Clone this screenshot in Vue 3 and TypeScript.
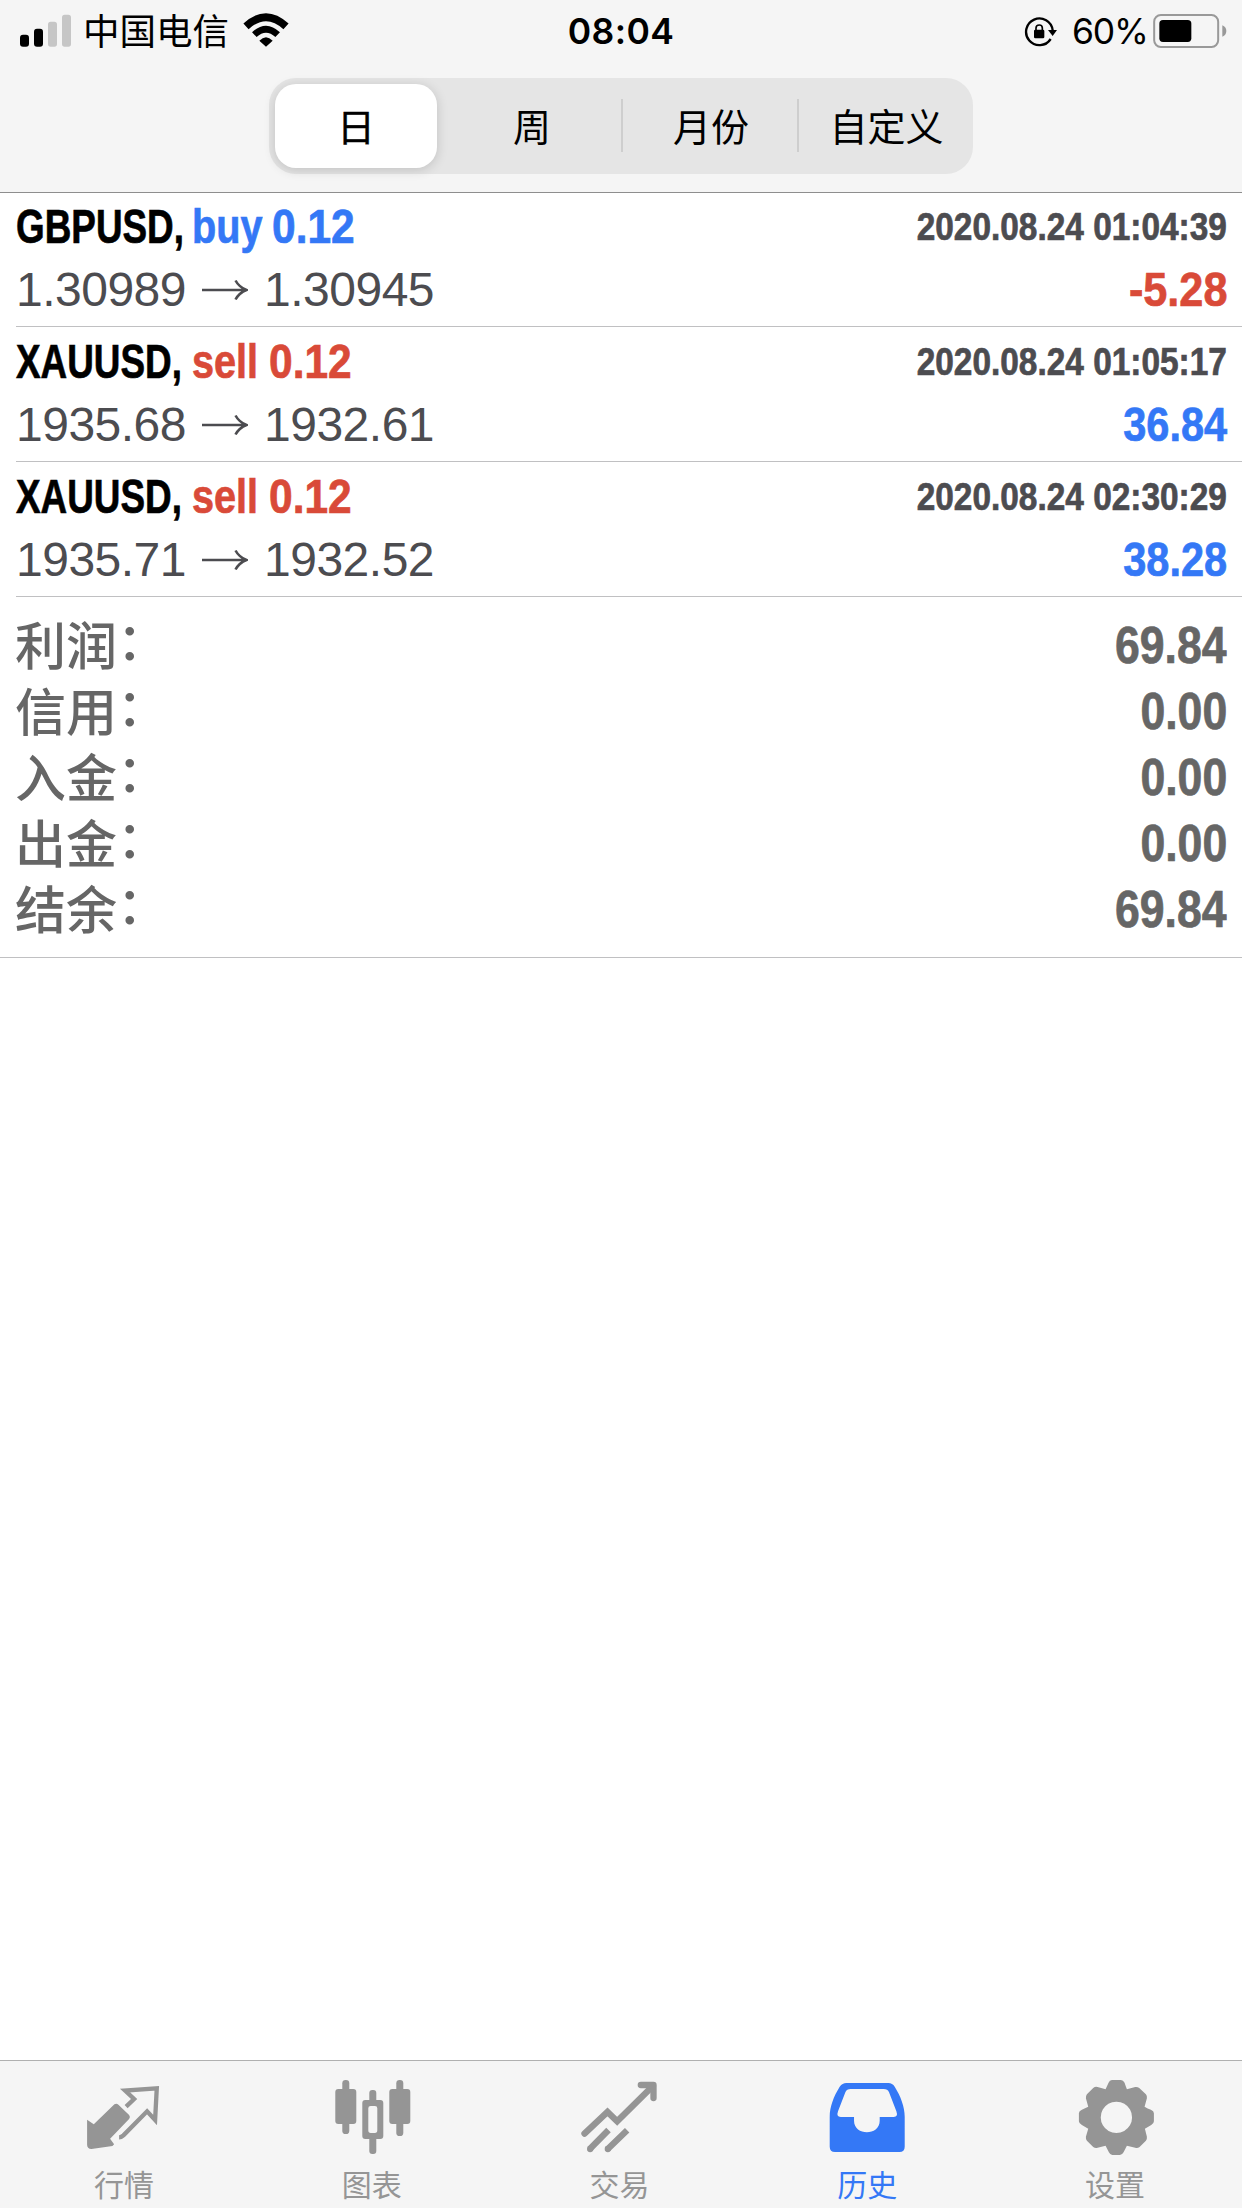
<script setup lang="ts">
interface Deal {
  symbol: string
  side: 'buy' | 'sell'
  volume: string
  open: string
  close: string
  time: string
  profit: string
}

const periods: string[] = ['日', '周', '月份', '自定义']

const deals: Deal[] = [
  { symbol: 'GBPUSD', side: 'buy', volume: '0.12', open: '1.30989', close: '1.30945', time: '2020.08.24 01:04:39', profit: '-5.28' },
  { symbol: 'XAUUSD', side: 'sell', volume: '0.12', open: '1935.68', close: '1932.61', time: '2020.08.24 01:05:17', profit: '36.84' },
  { symbol: 'XAUUSD', side: 'sell', volume: '0.12', open: '1935.71', close: '1932.52', time: '2020.08.24 02:30:29', profit: '38.28' },
]

const totals = [
  { label: '利润', value: '69.84' },
  { label: '信用', value: '0.00' },
  { label: '入金', value: '0.00' },
  { label: '出金', value: '0.00' },
  { label: '结余', value: '69.84' },
]
</script>

<template>
  <div class="screen">
    <header class="top">
      <div class="status">
        <div class="status-left">
          <svg class="signal" width="52" height="34" viewBox="60 40 156 102">
            <rect x="60" y="102" width="27" height="36" rx="9" />
            <rect x="102" y="84" width="27" height="54" rx="9" />
            <rect x="144" y="63" width="27" height="75" rx="8" fill="#c6c6c6" />
            <rect x="186" y="42" width="27" height="96" rx="8" fill="#c6c6c6" />
          </svg>
          <span class="carrier">中国电信</span>
          <svg class="wifi" width="46" height="34" viewBox="729 36 138 102">
            <path d="M738 76Q798 21 858 76" fill="none" stroke="#000" stroke-width="23" />
            <path d="M763 101Q798 68 833 101" fill="none" stroke="#000" stroke-width="20" />
            <path d="M778 119Q798 98 818 119L798 137Z" />
          </svg>
        </div>
        <span class="clock">08:04</span>
        <div class="status-right">
          <svg class="lock" width="34" height="34" viewBox="609 44 102 102">
            <path d="M689 116A40 40 0 1 1 695 90" fill="none" stroke="#000" stroke-width="7" />
            <path d="M681 89H708L695 107Z" />
            <rect x="639" y="88" width="31" height="26" rx="4" />
            <path d="M645 90V83Q645 74 655 74Q664 74 664 83V90" fill="none" stroke="#000" stroke-width="5" />
          </svg>
          <span class="percent">60%</span>
          <svg class="battery" width="74" height="36" viewBox="998 36 222 108">
            <rect x="1001.500" y="42" width="192" height="96" rx="20" fill="none" stroke="#999" stroke-width="6" />
            <rect x="1017" y="57" width="96" height="66" rx="11" />
            <path d="M1206 73Q1218 78 1218 90Q1218 102 1206 107Z" fill="#999" />
          </svg>
        </div>
      </div>
      <nav class="segments">
        <button v-for="(p, i) in periods" :key="p" class="segment" :class="{ active: i === 0, divided: i > 1 }">
          {{ p }}
        </button>
      </nav>
    </header>

    <main class="content">
      <article v-for="(d, i) in deals" :key="i" class="deal">
        <div class="line">
          <div class="title">
            <span class="symbol"><b>{{ d.symbol }},</b></span>
            <span class="side" :class="d.side"><b>{{ d.side }}</b></span>
            <span class="volume" :class="d.side"><b>{{ d.volume }}</b></span>
          </div>
          <span class="time">{{ d.time }}</span>
        </div>
        <div class="line second">
          <div class="prices">
            <span>{{ d.open }}</span>
            <svg class="arrow" width="46" height="24" viewBox="0 0 46 24">
              <path d="M0 12H44M33.500 2.500Q37 9 44.500 12Q37 15 33.500 21.500" fill="none" stroke="#4c4c50" stroke-width="2.600" />
            </svg>
            <span>{{ d.close }}</span>
          </div>
          <span class="profit" :class="{ negative: d.profit.startsWith('-') }">{{ d.profit }}</span>
        </div>
      </article>

      <section class="totals">
        <div v-for="t in totals" :key="t.label" class="total">
          <span class="label">{{ t.label }}<i>：</i></span>
          <span class="value">{{ t.value }}</span>
        </div>
      </section>
    </main>

    <footer class="tabs">
      <div class="tab">
        <svg width="80" height="80" viewBox="71.700 78 240 240">
          <path d="M81 209L101 223L163 163Q169 159 175 164L207 195Q212 201 207 207L150 266L162 283L157 288L94 297Q81 296 81 284Z" />
          <path d="M198 170L222 147L195 122L290 115L285 210L261 184L190 256Q183 262 177 262" fill="none" stroke="#959595" stroke-width="13" />
        </svg>
        <span>行情</span>
      </div>
      <div class="tab">
        <svg width="80" height="80" viewBox="815.100 78 240 240">
          <rect x="846" y="90" width="21" height="162" rx="10" />
          <rect x="825" y="117" width="63" height="105" rx="9" />
          <rect x="1008" y="90" width="21" height="168" rx="10" />
          <rect x="987" y="117" width="63" height="105" rx="9" />
          <rect x="927" y="120" width="21" height="40" rx="9" />
          <rect x="927" y="255" width="21" height="57" rx="9" />
          <path fill-rule="evenodd" d="M915 150H960Q969 150 969 159V258Q969 267 960 267H915Q906 267 906 258V159Q906 150 915 150ZM931 168Q924 168 924 175V241Q924 249 931 249H944Q951 249 951 241V175Q951 168 944 168Z" />
        </svg>
        <span>图表</span>
      </div>
      <div class="tab">
        <svg width="80" height="80" viewBox="118.500 78 240 240" fill="none" stroke="#959595" stroke-width="19">
          <path d="M135 251L204 186L233 214L340 108" stroke-linecap="round" />
          <path d="M304 105H342V144" stroke-linecap="round" stroke-linejoin="round" />
          <path d="M207 240L151 297M263 241L204 298" />
          <circle cx="152" cy="297" r="9.500" fill="#959595" stroke="none" />
          <circle cx="205" cy="297" r="9.500" fill="#959595" stroke="none" />
        </svg>
        <span>交易</span>
      </div>
      <div class="tab current">
        <svg width="80" height="80" viewBox="861.900 78 240 240">
          <path fill-rule="evenodd" d="M920 99H1046Q1058 99 1065 110C1083 139 1095 170 1095 200V290Q1095 306 1079 306H886Q870 306 870 290V200C870 170 882 139 900 110Q908 99 920 99ZM933 117Q921 117 917 127L895 184Q889 201 903 201H943V212C943 258 1020 258 1020 212V201H1062Q1076 201 1070 184L1048 127Q1044 117 1032 117Z" />
        </svg>
        <span>历史</span>
      </div>
      <div class="tab">
        <svg width="80" height="80" viewBox="165.300 78 240 240">
          <path fill-rule="evenodd" d="M276 90H303Q310 91 314 98Q318 110 321 118L346 111Q353 110 358 114L378 133Q382 138 381 145L374 170Q383 176 393 179Q402 183 402 190V214Q402 221 394 225L375 236L381 260Q382 267 378 272L359 291Q353 295 346 293L321 287L311 307Q308 314 300 315H277Q270 314 267 307L257 287L233 293Q226 295 220 291L201 272Q197 266 198 260L205 236L186 225Q177 221 177 214V190Q177 183 186 179L205 170L198 145Q197 139 201 133L220 114Q226 109 233 111L257 118L266 98Q269 91 276 90ZM289 155A47 47 0 1 0 290 155Z" />
        </svg>
        <span>设置</span>
      </div>
    </footer>
  </div>
</template>

<style>
body {
  background: #fff;
}
</style>

<style scoped>
.screen {
  width: 1242px;
  height: 2208px;
  display: flex;
  flex-direction: column;
  background: #fff;
  overflow: hidden;
  font-family: "Liberation Sans", "Noto Sans CJK SC", sans-serif;
}
.top {
  box-sizing: border-box;
  flex: none;
  height: 193px;
  background: #f5f5f5;
  border-bottom: 1px solid #8e8e8e;
}
.status {
  display: grid;
  grid-template-columns: 1fr auto 1fr;
  align-items: center;
  height: 60px;
  font-family: Inter, "Noto Sans CJK SC", sans-serif;
  color: #000;
}
.status-left {
  display: flex;
  align-items: center;
  padding-left: 20px;
}
.carrier {
  margin: -1px 0 0 11px;
  width: 146px;
  font: 36.5px/60px "Noto Sans CJK SC", sans-serif;
  white-space: nowrap;
}
.wifi {
  margin: -2px 0 0 14px;
}
.clock {
  margin-top: 3px;
  font-size: 35.5px;
  line-height: 58px;
  font-weight: 600;
  letter-spacing: 0.4px;
}
.status-right {
  display: flex;
  align-items: center;
  justify-content: flex-end;
  padding-right: 15px;
}
.lock {
  margin: 3px 14px 0 0;
}
.percent {
  margin-top: 3px;
  width: 75px;
  font-size: 35.5px;
  line-height: 58px;
  letter-spacing: -1.2px;
}
.battery {
  margin-left: 6px;
}
.segments {
  box-sizing: border-box;
  display: grid;
  grid-template-columns: 162px 185px 176px 175px;
  width: 704px;
  height: 96px;
  margin: 18px 0 0 269px;
  padding: 6px 0 6px 6px;
  border-radius: 27px;
  background: #e5e5e5;
}
.segment {
  position: relative;
  border: 0;
  padding: 0;
  background: none;
  color: #000;
  font: 38px/81px "Noto Sans CJK SC", sans-serif;
  padding-bottom: 3px;
}
.segment.active {
  background: #fff;
  border-radius: 21px;
  -webkit-text-stroke: 0.4px #000;
  box-shadow: 0 2px 12px rgba(0, 0, 0, 0.16);
}
.segment.active + .segment {
  padding-left: 5px;
}
.segment.divided {
  padding-left: 2px;
}
.segment.divided::before {
  content: "";
  position: absolute;
  left: -1px;
  top: 15px;
  width: 2px;
  height: 53px;
  background: #cecece;
}
.content {
  flex: 1;
  margin-top: -1px;
}
.deal {
  box-sizing: border-box;
  height: 135px;
  margin-left: 16px;
  padding: 5px 15px 0 0;
  border-bottom: 1px solid #c0c0c2;
}
.line {
  display: flex;
  justify-content: space-between;
  height: 60px;
}
.second {
  margin-top: 3px;
}
.title,
.time,
.profit,
.value {
  font-weight: 700;
  white-space: nowrap;
  -webkit-text-stroke: 0.7px currentColor;
}
.title {
  display: flex;
  font-size: 48px;
  line-height: 60px;
}
.title b {
  display: inline-block;
  transform-origin: left;
}
.symbol {
  width: 176px;
  color: #000;
}
.symbol b {
  transform: scaleX(0.768);
}
.side b {
  transform: scaleX(0.825);
}
.volume b {
  transform: scaleX(0.885);
}
.side.buy {
  width: 80px;
}
.side.sell {
  width: 77px;
}
.buy {
  color: #3478f6;
}
.sell {
  color: #d94a38;
}
.time {
  color: #4c4c50;
  font-size: 38px;
  line-height: 60px;
  transform: scaleX(0.879);
  transform-origin: right;
}
.prices {
  display: flex;
  align-items: center;
  color: #4c4c50;
  font-size: 48px;
  line-height: 60px;
  letter-spacing: -0.5px;
}
.arrow {
  margin: 0 16px;
}
.profit {
  color: #3478f6;
  font-size: 48px;
  line-height: 60px;
  transform: scaleX(0.865);
  transform-origin: right;
}
.profit.negative {
  color: #d94a38;
  transform: scaleX(0.9);
}
.totals {
  box-sizing: border-box;
  height: 361px;
  padding: 15px 15px 0 16px;
  border-bottom: 1px solid #c0c0c2;
  color: #666;
}
.total {
  display: flex;
  justify-content: space-between;
  height: 66px;
  line-height: 66px;
}
.label {
  margin: 3px 0 0 -1px;
  font-size: 51px;
  font-weight: 500;
}
.label i {
  position: relative;
  top: -5px;
  font-style: normal;
}
.value {
  margin-top: 1px;
  font-size: 51px;
  transform: scaleX(0.875);
  transform-origin: right;
}
.tabs {
  box-sizing: border-box;
  flex: none;
  display: grid;
  grid-template-columns: repeat(5, 1fr);
  height: 148px;
  padding: 15px 3px 0 0;
  border-top: 1px solid #b0b0b0;
  background: #f5f5f5;
}
.tab {
  display: flex;
  flex-direction: column;
  align-items: center;
  color: #959595;
  fill: #959595;
}
.tab span {
  margin-top: 5px;
  font: 30px/44px "Noto Sans CJK SC", sans-serif;
}
.tab.current {
  color: #3478f6;
  fill: #3478f6;
}
</style>
